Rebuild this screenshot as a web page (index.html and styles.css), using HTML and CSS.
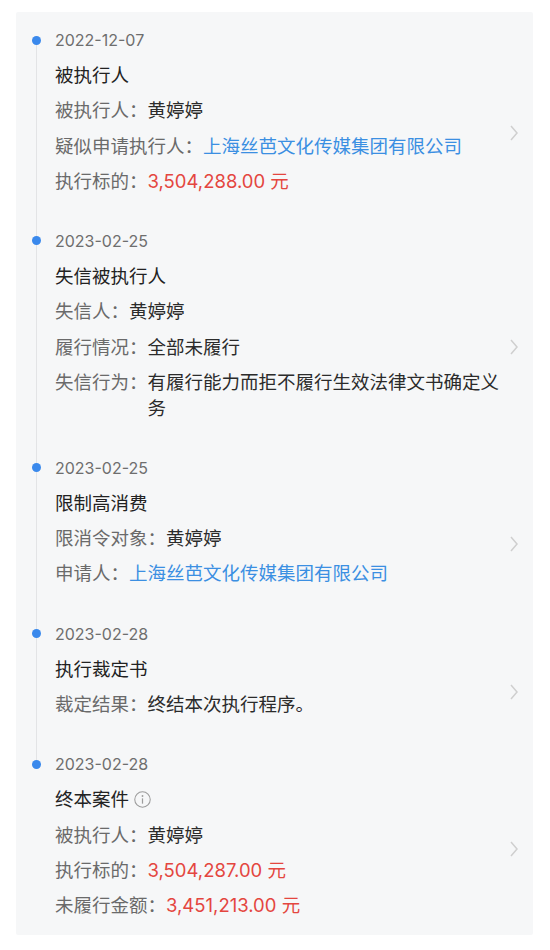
FILE: index.html
```html
<!DOCTYPE html>
<html lang="zh-CN">
<head>
<meta charset="utf-8">
<link rel="stylesheet" href="styles.css">
</head>
<body>
<div class="card">
  <div class="item">
    <div class="date">2022-12-07</div>
    <div class="title">被执行人</div>
    <div class="row"><span class="label">被执行人：</span><span class="value">黄婷婷</span></div>
    <div class="row"><span class="label">疑似申请执行人：</span><span class="value link">上海丝芭文化传媒集团有限公司</span></div>
    <div class="row"><span class="label">执行标的：</span><span class="value money">3,504,288.00 元</span></div>
    <svg class="chev" viewBox="0 0 8 16"><path d="M1 1 L7 8 L1 15" fill="none" stroke="#cfcfcf" stroke-width="1.5"/></svg>
  </div>
  <div class="item">
    <div class="date">2023-02-25</div>
    <div class="title">失信被执行人</div>
    <div class="row"><span class="label">失信人：</span><span class="value">黄婷婷</span></div>
    <div class="row"><span class="label">履行情况：</span><span class="value">全部未履行</span></div>
    <div class="row"><span class="label">失信行为：</span><span class="value">有履行能力而拒不履行生效法律文书确定义务</span></div>
    <svg class="chev" viewBox="0 0 8 16"><path d="M1 1 L7 8 L1 15" fill="none" stroke="#cfcfcf" stroke-width="1.5"/></svg>
  </div>
  <div class="item">
    <div class="date">2023-02-25</div>
    <div class="title">限制高消费</div>
    <div class="row"><span class="label">限消令对象：</span><span class="value">黄婷婷</span></div>
    <div class="row"><span class="label">申请人：</span><span class="value link">上海丝芭文化传媒集团有限公司</span></div>
    <svg class="chev" viewBox="0 0 8 16"><path d="M1 1 L7 8 L1 15" fill="none" stroke="#cfcfcf" stroke-width="1.5"/></svg>
  </div>
  <div class="item">
    <div class="date">2023-02-28</div>
    <div class="title">执行裁定书</div>
    <div class="row"><span class="label">裁定结果：</span><span class="value">终结本次执行程序。</span></div>
    <svg class="chev" viewBox="0 0 8 16"><path d="M1 1 L7 8 L1 15" fill="none" stroke="#cfcfcf" stroke-width="1.5"/></svg>
  </div>
  <div class="item">
    <div class="date">2023-02-28</div>
    <div class="title">终本案件<svg class="info" viewBox="0 0 18 18"><circle cx="9" cy="9" r="8.2" fill="none" stroke="#9c9c9c" stroke-width="1.1"/><circle cx="9" cy="5.3" r="1" fill="#9c9c9c"/><path d="M9 7.8 V13.4" stroke="#9c9c9c" stroke-width="1.3"/></svg></div>
    <div class="row"><span class="label">被执行人：</span><span class="value">黄婷婷</span></div>
    <div class="row"><span class="label">执行标的：</span><span class="value money">3,504,287.00 元</span></div>
    <div class="row"><span class="label">未履行金额：</span><span class="value money">3,451,213.00 元</span></div>
    <svg class="chev" viewBox="0 0 8 16"><path d="M1 1 L7 8 L1 15" fill="none" stroke="#cfcfcf" stroke-width="1.5"/></svg>
  </div>
</div>
</body>
</html>
```

FILE: styles.css
```css
html, body {
  margin: 0;
  padding: 0;
  background: #ffffff;
}
body {
  font-family: "Inter", "Noto Sans CJK SC", sans-serif;
  padding: 12px 17px 0 16px;
}
.card {
  background: #f6f7f8;
  padding-top: 16px;
  border-radius: 2px;
}
.item {
  position: relative;
  padding: 0 28px 35.2px 39px;
}
.item:last-child {
  padding-bottom: 17px;
}
.item::before {
  content: "";
  position: absolute;
  left: 20px;
  top: 12px;
  bottom: -12px;
  width: 1px;
  background: #e3e4e6;
}
.item:last-child::before {
  display: none;
}
.date {
  position: relative;
  font-size: 16px;
  line-height: 24px;
  color: #6e6e6e;
  margin-bottom: 10.2px;
}
.date::before {
  content: "";
  position: absolute;
  left: -23.5px;
  top: 7.5px;
  width: 9px;
  height: 9px;
  border-radius: 50%;
  background: #3a89ec;
}
.title {
  font-size: 18.5px;
  line-height: 26px;
  color: #222;
  display: flex;
  align-items: center;
}
.info {
  width: 17px;
  height: 17px;
  margin-left: 5px;
}
.row {
  display: flex;
  font-size: 18.5px;
  line-height: 26px;
  margin-top: 9.2px;
}
.label {
  color: #6a6a6a;
  flex: none;
}
.value {
  color: #2b2b2b;
  flex: 1;
  min-width: 0;
}
.link {
  color: #3b8fe2;
}
.money {
  color: #e4463f;
}
.chev {
  position: absolute;
  right: 15px;
  top: calc(50% + 5px);
  transform: translateY(-50%);
  width: 8px;
  height: 16px;
}
```
